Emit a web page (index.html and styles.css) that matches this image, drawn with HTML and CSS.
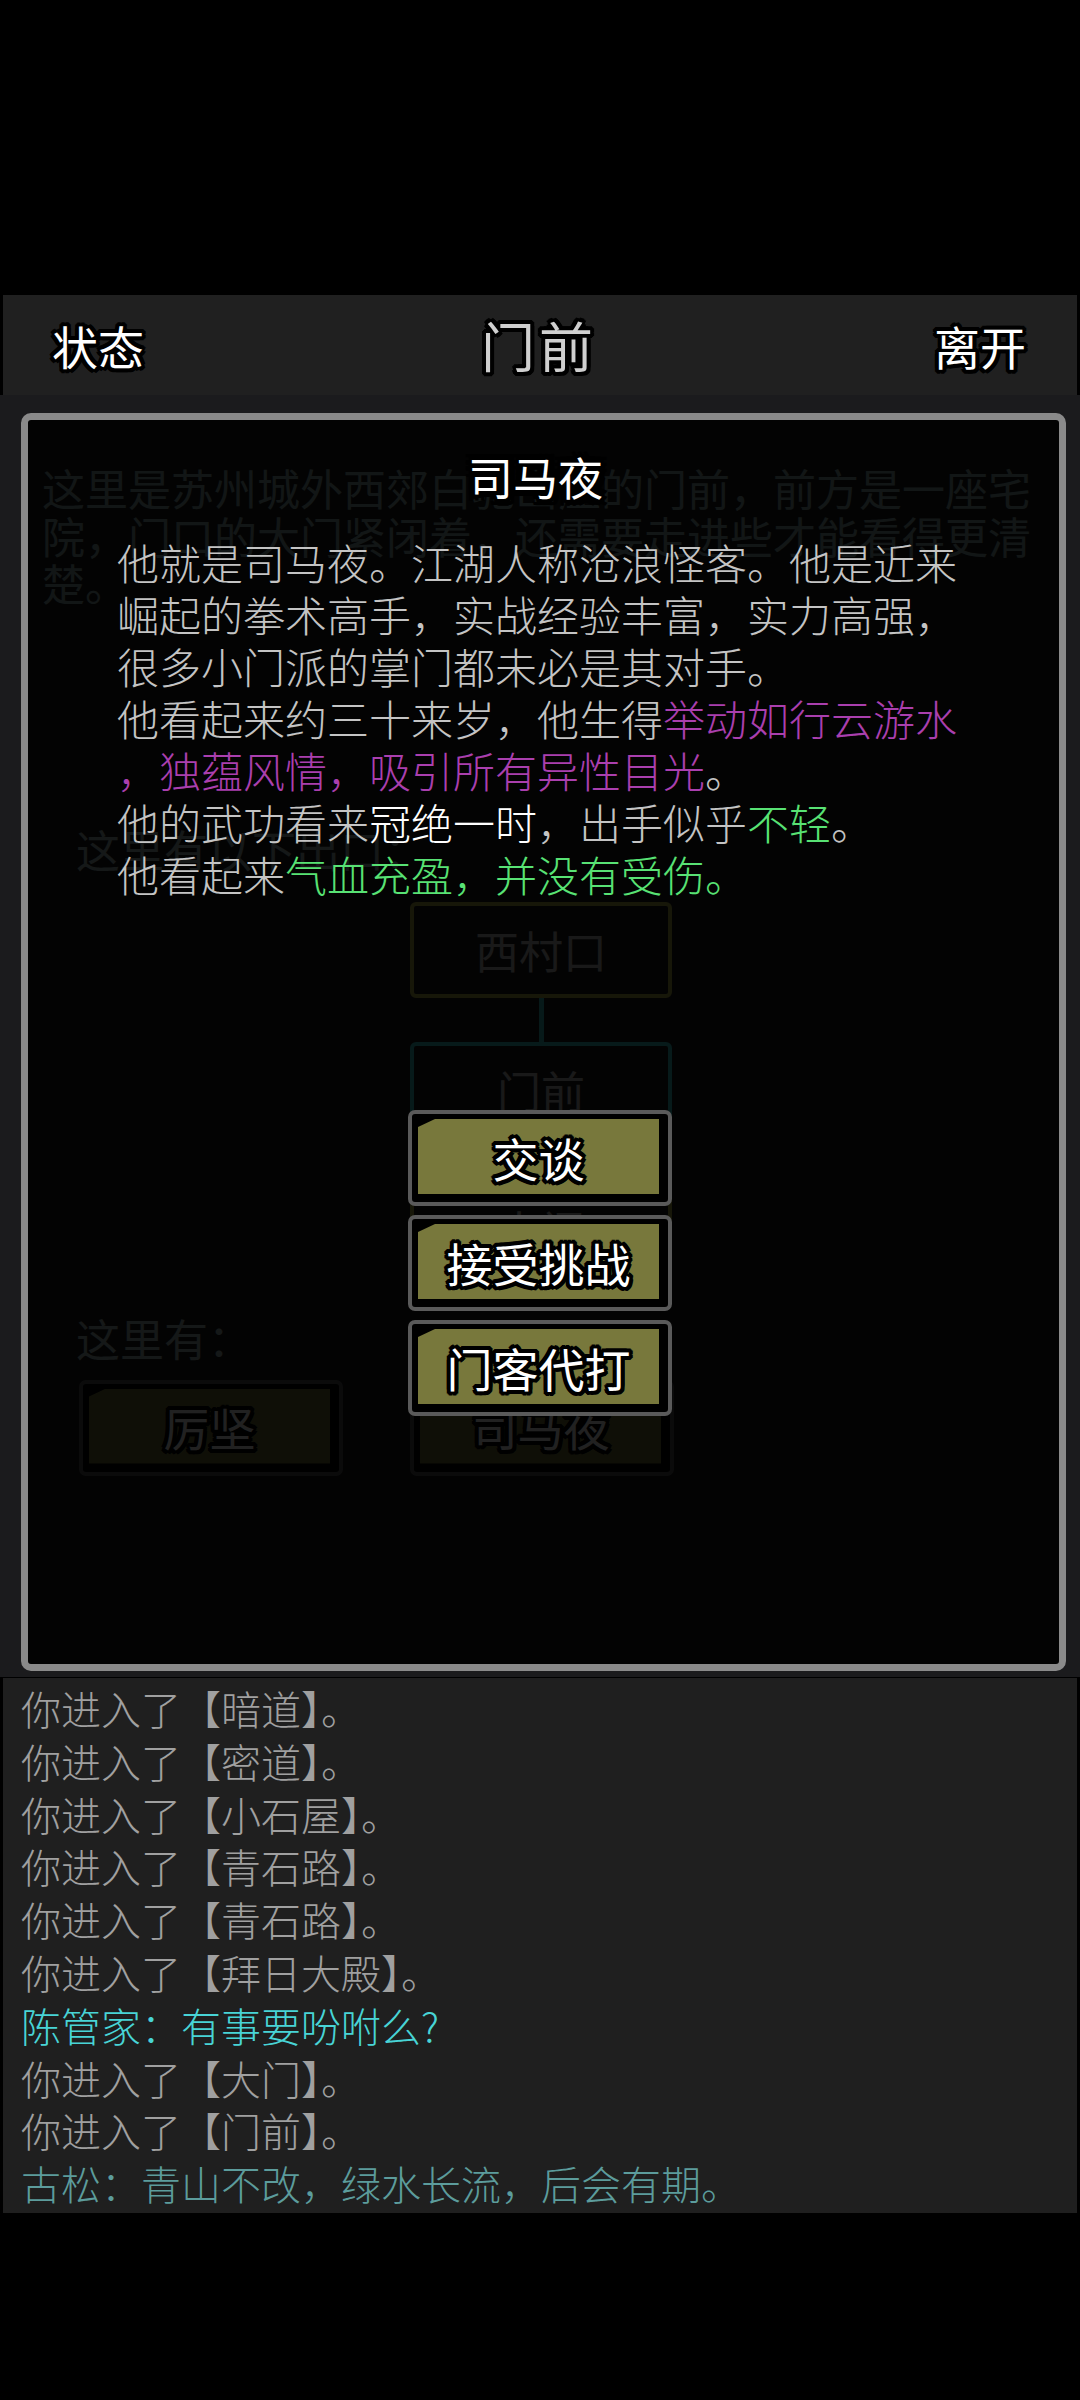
FILE: index.html
```html
<!DOCTYPE html>
<html lang="zh-CN">
<head>
<meta charset="utf-8">
<title>门前</title>
<link rel="stylesheet" href="styles.css">
</head>
<body>
<div class="screen">
  <div class="topgap"></div>
  <header class="bar">
    <span class="bar-btn outlined">状态</span>
    <span class="bar-title outlined">门前</span>
    <span class="bar-btn outlined">离开</span>
  </header>
  <main class="scene">
    <p class="scene-desc">这里是苏州城外西郊白驼山庄的门前，前方是一座宅<br>院，门口的大门紧闭着，还需要走进些才能看得更清<br>楚。</p>
    <p class="scene-label exits-label">这里有以下出口：</p>
    <div class="map">
      <div class="room room-exit">西村口</div>
      <div class="link"></div>
      <div class="room room-here">门前</div>
      <div class="link"></div>
      <div class="room room-exit">大门</div>
    </div>
    <p class="scene-label here-label">这里有：</p>
    <div class="npcs">
      <div class="btn"><span class="btn-face outlined">厉坚</span></div>
      <div class="btn"><span class="btn-face outlined">司马夜</span></div>
    </div>

    <section class="dialog">
      <h2 class="dialog-title">司马夜</h2>
      <p class="dialog-desc">他就是司马夜。江湖人称沧浪怪客。他是近来<br>崛起的拳术高手，实战经验丰富，实力高强，<br>很多小门派的掌门都未必是其对手。<br>他看起来约三十来岁，他生得<span class="c-purple">举动如行云游水</span><br><span class="c-purple">，独蕴风情，吸引所有异性目光</span>。<br>他的武功看来<span class="c-white">冠绝一时</span>，出手似乎<span class="c-green">不轻</span>。<br>他看起来<span class="c-green">气血充盈，并没有受伤。</span></p>
      <div class="options">
        <div class="btn"><span class="btn-face outlined">交谈</span></div>
        <div class="btn"><span class="btn-face outlined">接受挑战</span></div>
        <div class="btn"><span class="btn-face outlined">门客代打</span></div>
      </div>
    </section>
  </main>
  <section class="log">
    <div class="log-line">你进入了【暗道】。</div>
    <div class="log-line">你进入了【密道】。</div>
    <div class="log-line">你进入了【小石屋】。</div>
    <div class="log-line">你进入了【青石路】。</div>
    <div class="log-line">你进入了【青石路】。</div>
    <div class="log-line">你进入了【拜日大殿】。</div>
    <div class="log-line log-cyan">陈管家：有事要吩咐么?</div>
    <div class="log-line">你进入了【大门】。</div>
    <div class="log-line">你进入了【门前】。</div>
    <div class="log-line log-teal">古松：青山不改，绿水长流，后会有期。</div>
  </section>
</div>
</body>
</html>
```
FILE: styles.css
```css
html, body {
  margin: 0;
  padding: 0;
  background: #000;
}
body {
  font-family: "Noto Sans CJK SC", "Noto Sans", sans-serif;
}
.screen {
  width: 1080px;
  height: 2400px;
  display: flex;
  flex-direction: column;
  overflow: hidden;
}
.topgap {
  flex: none;
  height: 295px;
}
.outlined {
  text-shadow:
    -3px -3px 0 #000, 0 -3px 0 #000, 3px -3px 0 #000, 3px 0 0 #000,
    3px 3px 0 #000, 0 3px 0 #000, -3px 3px 0 #000, -3px 0 0 #000,
    -2px -4px 0 #000, 2px -4px 0 #000, 4px -2px 0 #000, 4px 2px 0 #000,
    2px 4px 0 #000, -2px 4px 0 #000, -4px 2px 0 #000, -4px -2px 0 #000;
}
.bar {
  flex: none;
  height: 100px;
  margin: 0 3px;
  background: #202020;
  display: flex;
  align-items: center;
  justify-content: space-between;
  padding: 0 51px 0 49px;
}
.bar-btn {
  font-size: 46px;
  line-height: 1;
  color: #fff;
}
.bar-title {
  font-size: 54px;
  line-height: 1;
  color: #cfcfcf;
  font-weight: 400;
  letter-spacing: 4px;
}
.scene {
  flex: none;
  position: relative;
  height: 1282px;
  box-sizing: border-box;
  padding-top: 69px;
  background: #1b1b1d;
}
.scene p {
  margin: 0;
}
.scene-desc {
  margin-left: 42px !important;
  font-size: 43px;
  line-height: 47.5px;
  color: #8eaaaa;
}
.scene-label {
  font-size: 44px;
  line-height: 50px;
  color: #a0b6b6;
}
.exits-label {
  margin: 217px 0 0 76px !important;
}
.map {
  margin: 28px 0 0 410px;
  width: 262px;
  display: flex;
  flex-direction: column;
  align-items: center;
}
.room {
  box-sizing: border-box;
  width: 262px;
  height: 96px;
  border: 4px solid;
  border-radius: 6px;
  display: flex;
  align-items: center;
  justify-content: center;
  font-size: 44px;
  color: #c2c2c2;
}
.room-exit {
  border-color: #b0b048;
}
.room-here {
  border-color: #38c6c6;
}
.link {
  width: 5px;
  height: 44px;
  background: #38c0c0;
}
.here-label {
  margin: 35px 0 0 76px !important;
}
.npcs {
  margin: 17px 0 0 79px;
  display: grid;
  grid-template-columns: repeat(3, 264px);
  column-gap: 67px;
}
.btn {
  box-sizing: border-box;
  width: 264px;
  height: 96px;
  border: 4px solid #5a5a5a;
  border-radius: 7px;
  background: #000;
  padding: 5px 9px 8px 6px;
  display: flex;
}
.btn-face {
  flex: 1;
  display: flex;
  align-items: center;
  justify-content: center;
  background: #78783c;
  clip-path: polygon(17px 0, 100% 0, 100% 100%, 0 100%, 0 8px);
  font-size: 46px;
  line-height: 1;
  color: #fff;
}
.dialog {
  position: absolute;
  left: 21px;
  top: 18px;
  width: 1045px;
  height: 1258px;
  box-sizing: border-box;
  border: 7px solid #8a8a8a;
  border-radius: 10px;
  background: rgba(0, 0, 0, 0.87);
  padding-top: 27px;
}
.dialog-title {
  margin: 0;
  padding-right: 16px;
  text-align: center;
  font-size: 45px;
  line-height: 60px;
  font-weight: 400;
  color: #fff;
  text-shadow:
    -6px -6px 0 #000, 0 -6px 0 #000, 6px -6px 0 #000, 6px 0 0 #000,
    6px 6px 0 #000, 0 6px 0 #000, -6px 6px 0 #000, -6px 0 0 #000,
    -3px -3px 0 #000, 3px 3px 0 #000, -3px 3px 0 #000, 3px -3px 0 #000;
}
.scene .dialog-desc {
  margin: 29px 0 0 0;
  padding-left: 89px;
  font-size: 42px;
  line-height: 52px;
  font-weight: 300;
  color: #c4c4c4;
  white-space: nowrap;
}
.c-purple {
  color: #aa3fae;
}
.c-white {
  color: #fff;
}
.c-green {
  color: #58e274;
}
.options {
  margin: 210px 0 0 380px;
  display: flex;
  flex-direction: column;
  gap: 9px;
}
.log {
  flex: none;
  margin: 1px 3px 0;
  height: 535px;
  box-sizing: border-box;
  background: #1f1f1f;
  padding: 4px 18px 0;
  font-size: 40px;
  line-height: 52.8px;
  font-weight: 300;
  color: #a0a0a0;
}
.log-line {
  white-space: nowrap;
}
.log-cyan {
  color: #48d4d6;
}
.log-teal {
  color: #5c9c9c;
}
```
